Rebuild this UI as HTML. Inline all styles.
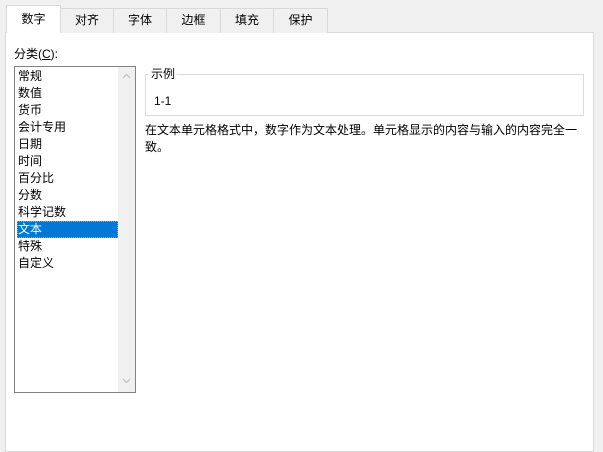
<!DOCTYPE html>
<html><head><meta charset="utf-8"><style>
*{margin:0;padding:0;box-sizing:border-box}
body{width:603px;height:446px;background:#f0f0f0;font-family:"Liberation Sans","Noto Sans CJK SC","Microsoft YaHei",sans-serif;font-size:12px;color:#000;position:relative;overflow:hidden}
.abs{position:absolute}
.panel{left:5px;top:32px;width:589px;height:420px;background:#fff;border:1px solid #d9d9d9}
.tab{top:8px;height:25px;border:1px solid #d9d9d9;border-bottom:none;background:#f0f0f0;text-align:center;line-height:23px;font-size:12px}
.tab.sel{top:5px;height:28px;background:#fff;line-height:26px;z-index:2;border-bottom:none}
.list{left:14px;top:66px;width:122px;height:327px;border:1px solid #828282;background:#fff}
.sb{left:103px;top:0;width:17px;height:325px;background:#f0f0f0}
.item{left:2px;width:101px;height:17px;line-height:17px;padding-left:1px}
.item.sel{background:#0078d7;color:#fff;outline:1px dotted #6fb1e6;outline-offset:-1px}
.grp{left:145px;top:74px;width:439px;height:42px;border:1px solid #dcdcdc}
</style></head><body>
<div class="abs panel"></div>
<div class="abs tab sel" style="left:6px;width:55px">数字</div>
<div class="abs tab" style="left:60px;width:54px">对齐</div>
<div class="abs tab" style="left:113px;width:54px">字体</div>
<div class="abs tab" style="left:166px;width:55px">边框</div>
<div class="abs tab" style="left:220px;width:54px">填充</div>
<div class="abs tab" style="left:273px;width:55px">保护</div>
<div class="abs" style="left:14px;top:45px">分类(<u>C</u>):</div>
<div class="abs list">
  <div class="abs sb">
    <svg class="abs" style="left:4px;top:6px" width="9" height="6"><path d="M1 5 L4.5 1.5 L8 5" stroke="#c0c0c0" fill="none" stroke-width="1.2"/></svg>
    <svg class="abs" style="left:4px;top:311px" width="9" height="6"><path d="M1 1 L4.5 4.5 L8 1" stroke="#c0c0c0" fill="none" stroke-width="1.2"/></svg>
  </div>
  <div class="abs item" style="top:1px">常规</div>
  <div class="abs item" style="top:18px">数值</div>
  <div class="abs item" style="top:35px">货币</div>
  <div class="abs item" style="top:52px">会计专用</div>
  <div class="abs item" style="top:69px">日期</div>
  <div class="abs item" style="top:86px">时间</div>
  <div class="abs item" style="top:103px">百分比</div>
  <div class="abs item" style="top:120px">分数</div>
  <div class="abs item" style="top:137px">科学记数</div>
  <div class="abs item sel" style="top:154px">文本</div>
  <div class="abs item" style="top:171px">特殊</div>
  <div class="abs item" style="top:188px">自定义</div>
</div>
<div class="abs grp"></div>
<div class="abs" style="left:149px;top:66px;background:#fff;padding:0 2px;line-height:16px">示例</div>
<div class="abs" style="left:154px;top:93px;line-height:16px">1-1</div>
<div class="abs" style="left:145px;top:122px;width:445px;line-height:17px">在文本单元格格式中，数字作为文本处理。单元格显示的内容与输入的内容完全一致。</div>
</body></html>
